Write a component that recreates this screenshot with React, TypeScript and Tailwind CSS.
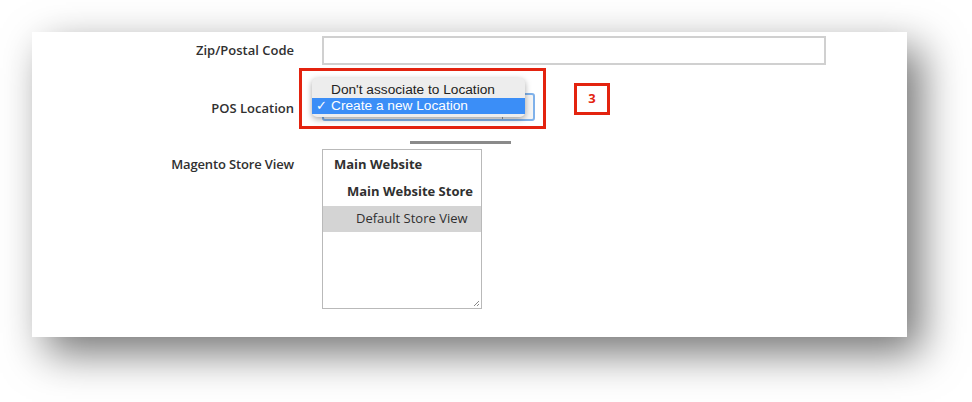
import React from 'react';

const font = { fontFamily: '"Open Sans", "Liberation Sans", sans-serif' };
const macFont = { fontFamily: '"Liberation Sans", Arial, sans-serif' };

export default function App() {
  return (
    <div className="w-[972px] h-[402px] bg-white pl-[32px] pt-[32px] overflow-hidden" style={font}>
      <div className="relative w-[875px] h-[305px] bg-white shadow-[14px_16px_40px_rgba(0,0,0,0.55)]">
        <div className="grid grid-cols-[262px_1fr] gap-x-[28px] gap-y-[28px] pt-[4px] pb-[28px]">
          <Label>Zip/Postal Code</Label>
          <input
            type="text"
            className="w-[504px] h-[29px] border-2 border-[#d0d0d0] bg-white outline-none"
          />

          <Label className="pt-[3px]">POS Location</Label>
          <div className="relative w-[213px] h-[28px] border-2 border-[#7fb1ea] rounded-[3px] bg-[#f4f4f4]">
            <div className="absolute right-[30px] top-0 bottom-0 w-px bg-[#9a9a9a]" />
          </div>

          <div className="text-right text-[13px] font-semibold text-[#303030] pt-[6px] tracking-[-0.15px]">Magento Store View</div>
          <StoreList />
        </div>

        {/* annotation + open native dropdown */}
        <div className="absolute left-[267px] top-[36px] w-[247px] h-[61px] border-[3px] border-[#e3230f]" />
        <div
          className="absolute left-[280px] top-[46px] w-[213px] h-[39px] rounded-[5px] bg-[#ededed] pt-[4px] shadow-[0_2px_6px_rgba(0,0,0,0.35)] text-[13.7px] leading-[16px]"
          style={macFont}
        >
          <div className="pl-[19px] h-[16px] text-[#222]">Don't associate to Location</div>
          <div className="flex items-center h-[16px] bg-[#3b8ef7] text-white">
            <span className="w-[19px] pl-[4px] text-[13px]">✓</span>
            <span>Create a new Location</span>
          </div>
        </div>
        <div className="absolute left-[378px] top-[109px] w-[101px] h-[3px] bg-[#8a8a8a]" />
        <div className="absolute left-[542px] top-[51px] w-[36px] h-[32px] border-[3px] border-[#e3230f] flex items-center justify-center text-[#e3230f] text-[13px] font-bold">
          3
        </div>
      </div>
    </div>
  );
}

function Label({ children, className = '' }: { children: React.ReactNode; className?: string }) {
  return (
    <div className={`flex items-center justify-end text-[13px] font-semibold text-[#303030] ${className}`}>{children}</div>
  );
}

function StoreList() {
  return (
    <div className="relative w-[160px] h-[160px] border border-[#b9b9b9] bg-white text-[13px] text-[#303030]">
      <div className="pt-[1px]">
        <div className="h-[27px] flex items-center pl-[11px] font-bold">Main Website</div>
        <div className="h-[28px] flex items-center pl-[24px] font-bold">Main Website Store</div>
        <div className="h-[26px] flex items-center pl-[33px] bg-[#d4d4d4]">Default Store View</div>
      </div>
      <svg className="absolute right-[1px] bottom-[1px]" width="7" height="7" viewBox="0 0 7 7">
        <path d="M6 1 L1 6 M6 4 L4 6" stroke="#888" strokeWidth="1" />
      </svg>
    </div>
  );
}
